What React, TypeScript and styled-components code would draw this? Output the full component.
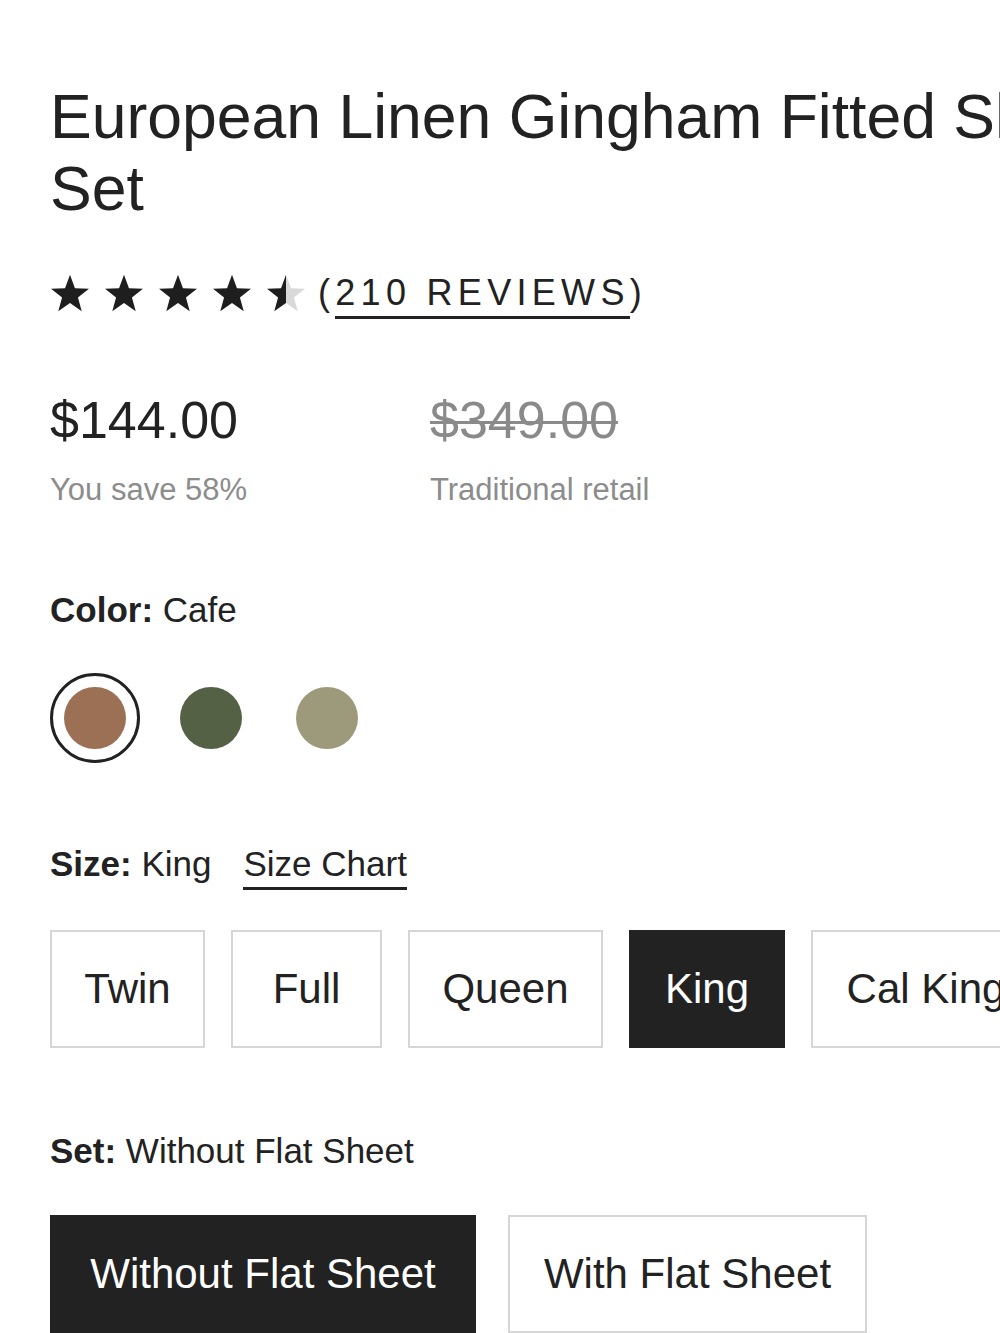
import React from "react";
import styled, { createGlobalStyle } from "styled-components";

const GlobalStyle = createGlobalStyle`
  html, body {
    margin: 0;
    padding: 0;
    background: #ffffff;
  }
  body {
    font-family: "Liberation Sans", Arial, sans-serif;
    color: #222222;
    overflow: hidden;
  }
`;

const Page = styled.div`
  width: 1000px;
  height: 1333px;
  overflow: hidden;
  padding: 80px 0 0 50px;
  box-sizing: border-box;
`;

const Inner = styled.div`
  width: 1150px;
`;

const Title = styled.h1`
  margin: 0;
  font-size: 62.5px;
  line-height: 72px;
  font-weight: 400;
  color: #222;
  width: 1100px;
`;

const RatingRow = styled.div`
  display: flex;
  align-items: center;
  gap: 14px;
  margin-top: 49px;
  height: 40px;
`;

const Stars = styled.div`
  display: flex;
  gap: 14px;
`;

const Reviews = styled.div`
  font-size: 36px;
  line-height: 40px;
  letter-spacing: 5.3px;
  text-transform: uppercase;
  color: #222;
  margin-left: -2px;
`;

const ReviewsLink = styled.span`
  border-bottom: 3px solid #222;
  padding-bottom: 3px;
`;

const PriceRow = styled.div`
  display: flex;
  margin-top: 77px;
`;

const PriceCol = styled.div<{ $width?: number }>`
  width: ${(p) => (p.$width ? `${p.$width}px` : "auto")};
  display: flex;
  flex-direction: column;
  gap: 22px;
`;

const Price = styled.div<{ $old?: boolean }>`
  font-size: 52px;
  line-height: 60px;
  color: ${(p) => (p.$old ? "#8a8a8a" : "#222")};
  text-decoration: ${(p) => (p.$old ? "line-through" : "none")};
  text-decoration-thickness: 3px;
`;

const Note = styled.div`
  font-size: 31px;
  line-height: 36px;
  color: #8c8c8c;
`;

const Label = styled.div<{ $top: number }>`
  display: flex;
  align-items: baseline;
  gap: 32px;
  margin-top: ${(p) => p.$top}px;
  font-size: 35px;
  line-height: 40px;
  color: #222;
`;

const Strong = styled.b`
  font-weight: 700;
`;

const ChartLink = styled.span`
  border-bottom: 3px solid #222;
  padding-bottom: 3px;
`;

const Swatches = styled.div`
  display: flex;
  gap: 26px;
  margin-top: 43px;
`;

const Swatch = styled.div<{ $selected?: boolean }>`
  width: 90px;
  height: 90px;
  box-sizing: border-box;
  border-radius: 50%;
  border: 3px solid ${(p) => (p.$selected ? "#222" : "transparent")};
  display: flex;
  align-items: center;
  justify-content: center;
`;

const Dot = styled.div<{ $color: string }>`
  width: 62px;
  height: 62px;
  border-radius: 50%;
  background: ${(p) => p.$color};
`;

const Options = styled.div<{ $top: number; $gap: number }>`
  display: flex;
  gap: ${(p) => p.$gap}px;
  margin-top: ${(p) => p.$top}px;
`;

const Option = styled.div<{ $active?: boolean; $width: number }>`
  width: ${(p) => p.$width}px;
  height: 118px;
  box-sizing: border-box;
  flex-shrink: 0;
  display: flex;
  align-items: center;
  justify-content: center;
  font-size: 42px;
  white-space: nowrap;
  border: 2px solid ${(p) => (p.$active ? "#222" : "#d6d6d6")};
  background: ${(p) => (p.$active ? "#222" : "#fff")};
  color: ${(p) => (p.$active ? "#fff" : "#222")};
`;

const Star = ({ fill = 1 }: { fill?: number }) => (
  <svg width="40" height="38" viewBox="0 0 24 23">
    <defs>
      <linearGradient id={`half${fill}`} x1="0" x2="1" y1="0" y2="0">
        <stop offset={fill} stopColor="#1e1e1e" />
        <stop offset={fill} stopColor="#d9d9d9" />
      </linearGradient>
    </defs>
    <polygon
      points="12,0.5 15,8.6 23.5,8.9 16.8,14.2 19.1,22.5 12,17.6 4.9,22.5 7.2,14.2 0.5,8.9 9,8.6"
      fill={`url(#half${fill})`}
    />
  </svg>
);

const sizes = [
  { name: "Twin", width: 155 },
  { name: "Full", width: 151 },
  { name: "Queen", width: 195 },
  { name: "King", width: 156 },
  { name: "Cal King", width: 230 },
];

export default function App() {
  return (
    <>
      <GlobalStyle />
      <Page>
        <Inner>
          <Title>European Linen Gingham Fitted Sheet Set</Title>
          <RatingRow>
            <Stars>
              <Star />
              <Star />
              <Star />
              <Star />
              <Star fill={0.5} />
            </Stars>
            <Reviews>
              (<ReviewsLink>210 Reviews</ReviewsLink>)
            </Reviews>
          </RatingRow>
          <PriceRow>
            <PriceCol $width={380}>
              <Price>$144.00</Price>
              <Note>You save 58%</Note>
            </PriceCol>
            <PriceCol>
              <Price $old>$349.00</Price>
              <Note>Traditional retail</Note>
            </PriceCol>
          </PriceRow>
          <Label $top={82}>
            <span>
              <Strong>Color:</Strong> Cafe
            </span>
          </Label>
          <Swatches>
            <Swatch $selected>
              <Dot $color="#9b7055" />
            </Swatch>
            <Swatch>
              <Dot $color="#546144" />
            </Swatch>
            <Swatch>
              <Dot $color="#9d9a7b" />
            </Swatch>
          </Swatches>
          <Label $top={81}>
            <span>
              <Strong>Size:</Strong> King
            </span>
            <ChartLink>Size Chart</ChartLink>
          </Label>
          <Options $top={40} $gap={26}>
            {sizes.map((s) => (
              <Option key={s.name} $width={s.width} $active={s.name === "King"}>
                {s.name}
              </Option>
            ))}
          </Options>
          <Label $top={83}>
            <span>
              <Strong>Set:</Strong> Without Flat Sheet
            </span>
          </Label>
          <Options $top={44} $gap={32}>
            <Option $active $width={426}>
              Without Flat Sheet
            </Option>
            <Option $width={359}>With Flat Sheet</Option>
          </Options>
        </Inner>
      </Page>
    </>
  );
}
